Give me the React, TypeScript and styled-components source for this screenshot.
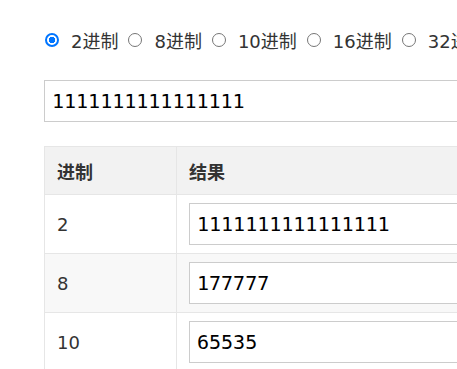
import React, { useState } from 'react';
import styled, { createGlobalStyle } from 'styled-components';

const GlobalStyle = createGlobalStyle`
  html, body {
    margin: 0;
    padding: 0;
    overflow: hidden;
    background: #fff;
  }
  body {
    font-family: "DejaVu Sans", "Noto Sans CJK SC", sans-serif;
    color: #333;
  }
`;

const Page = styled.div`
  width: 900px;
  padding: 28px 0 0 44px;
`;

const RadioRow = styled.div`
  display: flex;
  align-items: center;
  gap: 9px;
  height: 24px;
  font-size: 18px;
  white-space: nowrap;
`;

const RadioLabel = styled.label`
  display: flex;
  flex: none;
  align-items: center;
  gap: 12px;
  cursor: pointer;
`;

const Radio = styled.input`
  appearance: none;
  flex: none;
  box-sizing: border-box;
  width: 14px;
  min-width: 14px;
  height: 14px;
  margin: 0 0 0 1px;
  padding: 0;
  border-radius: 50%;
  border: 1.5px solid #767676;
  background: #fff;

  &:checked {
    border: 2px solid #0075ff;
    background: radial-gradient(circle, #0075ff 0 3px, #fff 3.5px);
  }
`;

const ValueInput = styled.input<{ $wide?: boolean }>`
  box-sizing: border-box;
  display: block;
  width: ${(p) => (p.$wide ? '620px' : '420px')};
  height: 42px;
  padding: 0 7px;
  border: 1px solid #cccccc;
  border-radius: 0;
  outline: none;
  font-family: "DejaVu Sans Mono", monospace;
  font-size: 20px;
  color: #000;
  background: #fff;
`;

const TopInput = styled(ValueInput)`
  margin-top: 28px;
`;

const Table = styled.table`
  margin-top: 24px;
  width: 760px;
  border-collapse: collapse;
  border: 1px solid #e6e6e6;
  font-size: 18px;
`;

const Th = styled.th<{ $first?: boolean }>`
  height: 47px;
  padding: 0 12px;
  text-align: left;
  font-weight: bold;
  color: #333;
  background: #f2f2f2;
  border: 1px solid #e6e6e6;
  width: ${(p) => (p.$first ? '107px' : 'auto')};
`;

const Row = styled.tr<{ $striped?: boolean }>`
  background: ${(p) => (p.$striped ? '#f8f8f8' : '#fff')};
`;

const Td = styled.td`
  height: 58px;
  padding: 0 12px;
  color: #333;
  border: 1px solid #e6e6e6;
  vertical-align: middle;
`;

const bases = [2, 8, 10, 16, 32, 36];

export default function App() {
  const [base, setBase] = useState(2);
  const [value, setValue] = useState('1111111111111111');
  const n = parseInt(value, base);

  return (
    <>
      <GlobalStyle />
      <Page>
        <RadioRow>
          {bases.map((b) => (
            <RadioLabel key={b}>
              <Radio
                type="radio"
                name="base"
                checked={base === b}
                onChange={() => setBase(b)}
              />
              {b}进制
            </RadioLabel>
          ))}
        </RadioRow>
        <TopInput $wide value={value} onChange={(e) => setValue(e.target.value)} />
        <Table>
          <thead>
            <tr>
              <Th $first>进制</Th>
              <Th>结果</Th>
            </tr>
          </thead>
          <tbody>
            {[2, 8, 10, 16].map((b, i) => (
              <Row key={b} $striped={i % 2 === 1}>
                <Td>{b}</Td>
                <Td>
                  <ValueInput readOnly value={isNaN(n) ? '' : n.toString(b)} />
                </Td>
              </Row>
            ))}
          </tbody>
        </Table>
      </Page>
    </>
  );
}
